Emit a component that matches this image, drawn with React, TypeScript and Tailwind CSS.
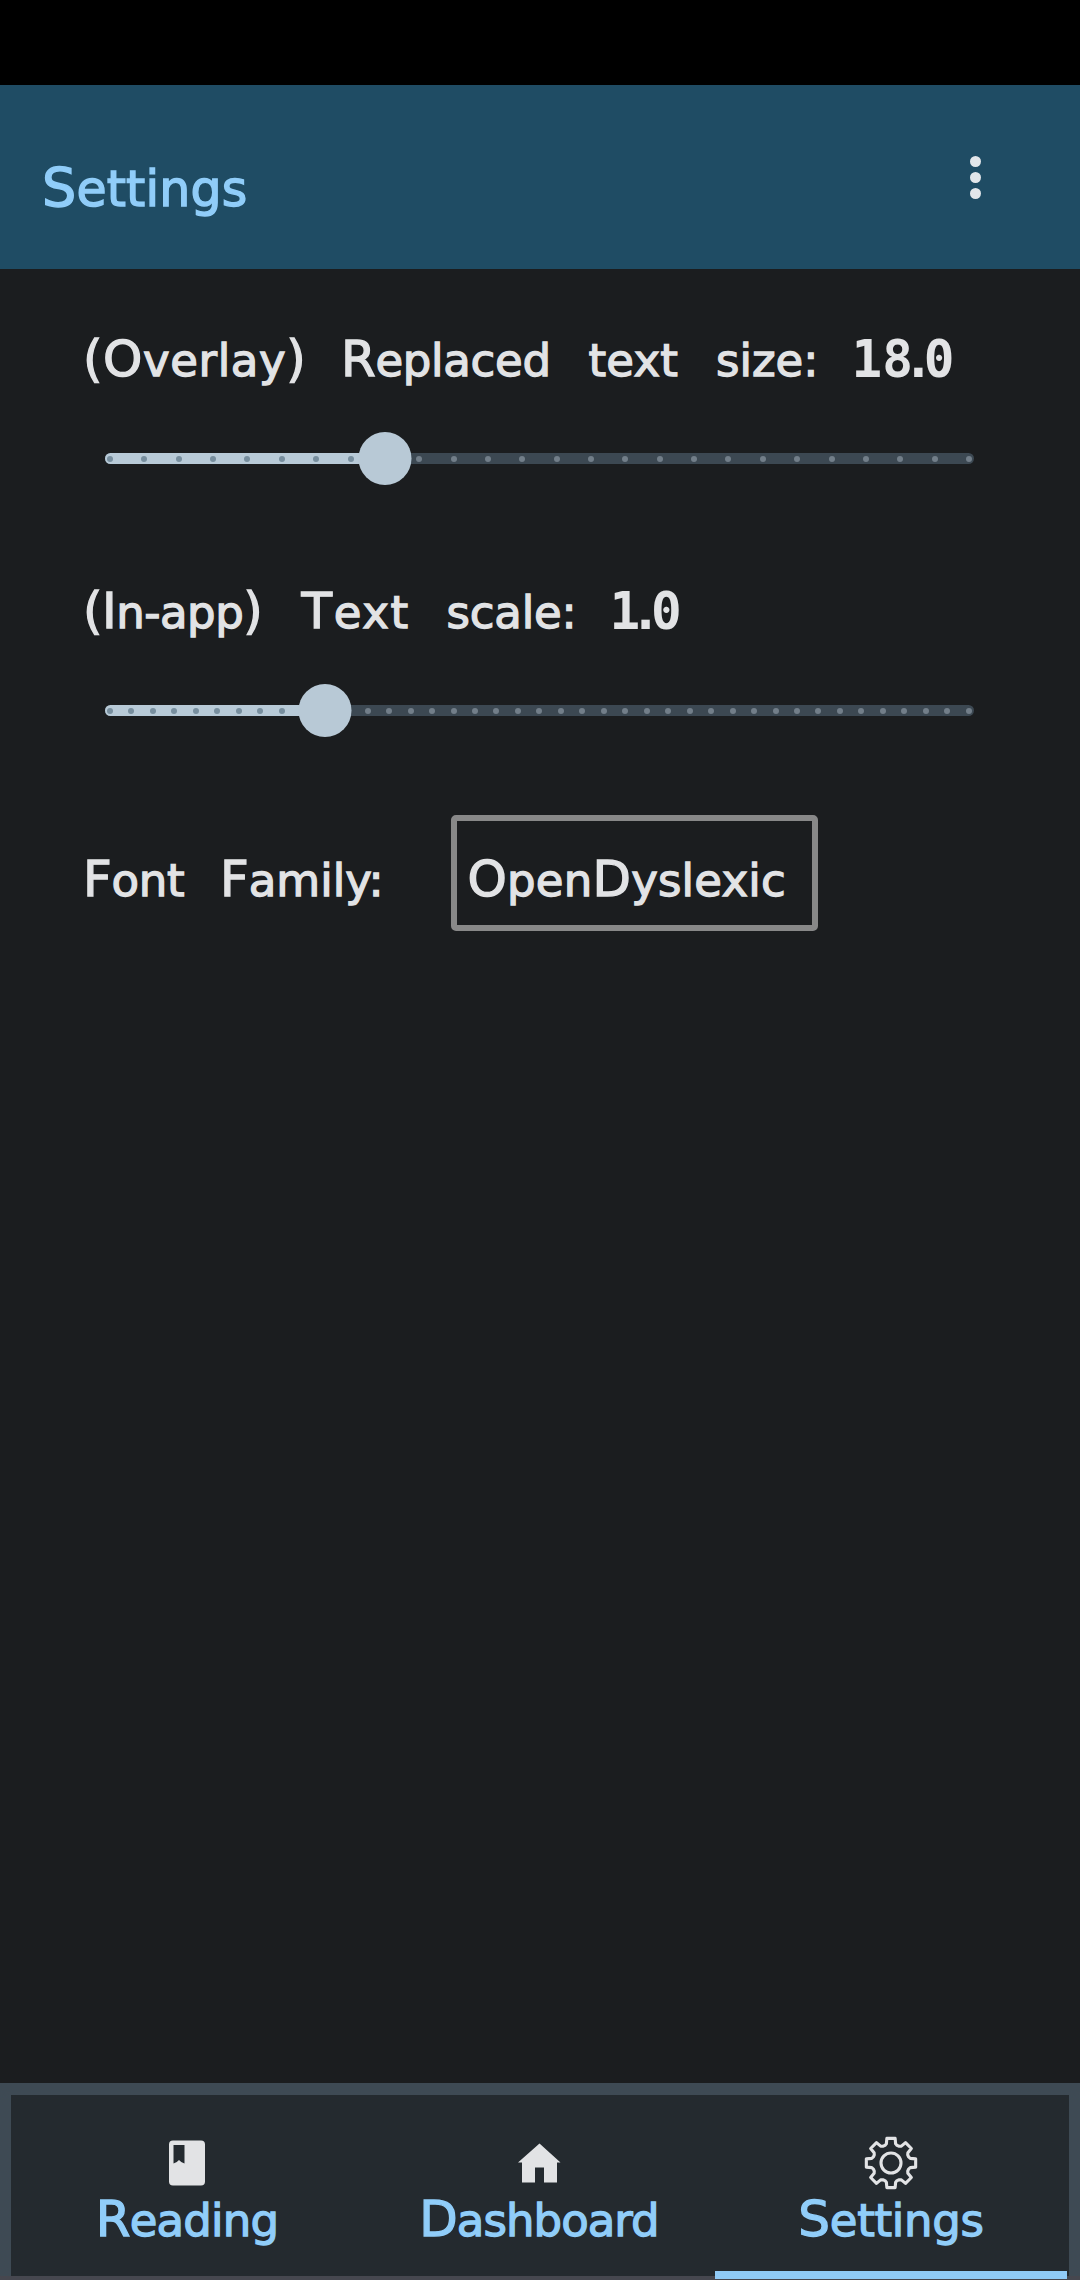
import React from "react";

type Part = { t: string; cls?: string };

function Mixed({ text, big, small }: { text: string; big: string; small: string }) {
  const parts: Part[] = (text.match(/[A-Z()]+|[^A-Z()]+/g) ?? []).map((t) => ({
    t,
    cls: /[A-Z()]/.test(t) ? big : small,
  }));
  return (
    <>
      {parts.map((p, i) => (
        <span key={i} className={p.cls}>
          {p.t}
        </span>
      ))}
    </>
  );
}

function Word({ text, className = "" }: { text: string; className?: string }) {
  return (
    <span
      className={`block h-[60px] shrink-0 whitespace-nowrap text-[50px] leading-[60px] [-webkit-text-stroke:1.3px_currentColor] ${className}`}
    >
      <Mixed text={text} big="text-[50px] leading-none" small="text-[45px] leading-none" />
    </span>
  );
}

function Value({ lead, last }: { lead: string; last: string }) {
  return (
    <span className="block h-[60px] whitespace-nowrap pt-px font-['DejaVu_Sans_Mono',monospace] text-[51px] font-bold leading-[60px]">
      {lead.slice(0, -1)}
      <span className="tracking-[-10px]">{lead.slice(-1)}.</span>
      {last}
    </span>
  );
}

function Slider({ steps, value }: { steps: number; value: number }) {
  const pos = 5 + (859 * value) / steps;
  return (
    <div className="relative ml-[105px] flex h-[53px] w-[869px] items-center">
      <div className="relative flex h-[11px] w-full items-center overflow-hidden rounded-full bg-[#3c4852]">
        <div className="absolute inset-y-0 left-0 bg-[#b8cad7]" style={{ width: pos }} />
        <div className="relative flex w-full justify-between px-[2px]">
          {Array.from({ length: steps + 1 }, (_, i) => (
            <span
              key={i}
              className={`size-[6px] rounded-full ${i < value ? "bg-[#778e9e]" : "bg-[#727e89]"}`}
            />
          ))}
        </div>
      </div>
      <div
        className="absolute top-0 size-[53px] -translate-x-1/2 rounded-full bg-[#b8c9d6]"
        style={{ left: pos + 0.5 }}
      />
    </div>
  );
}

function BookIcon() {
  return (
    <svg viewBox="0 0 54 54" className="size-[54px]" fill="#e2e3e5">
      <path
        fillRule="evenodd"
        d="M13 4.500h28q4 0 4 4v37q0 4-4 4H13q-4 0-4-4v-37q0-4 4-4zM13.500 9v18.500q3.500-1 5.500-3.500q2 2.500 5.500 3.500V9z"
      />
    </svg>
  );
}

function HomeIcon() {
  return (
    <svg viewBox="0 0 54 54" className="size-[54px]" fill="#e2e3e5">
      <path d="M27.500 7.500 48.500 26.500H45V46.500H32V31.500h-9V46.500H10V26.500H6z" />
    </svg>
  );
}

const gearPath = (() => {
  const pts: string[] = [];
  const at = (r: number, deg: number) => {
    const a = (deg * Math.PI) / 180;
    return `${(27 + r * Math.sin(a)).toFixed(2)} ${(27 - r * Math.cos(a)).toFixed(2)}`;
  };
  for (let k = 0; k < 8; k++) {
    const c = k * 45;
    pts.push(
      at(18.6, c - 19),
      at(19.8, c - 13.5),
      at(25, c - 9.5),
      at(25, c + 9.5),
      at(19.8, c + 13.5),
      at(18.6, c + 19),
    );
  }
  return `M${pts.join("L")}Z`;
})();

function GearIcon() {
  return (
    <svg viewBox="0 0 54 54" className="size-[54px]" fill="none" stroke="#e2e3e5" strokeWidth="3.1" strokeLinejoin="round">
      <path d={gearPath} />
      <circle cx="27" cy="27" r="10" />
    </svg>
  );
}

function Tab({ icon, label, className }: { icon: React.ReactNode; label: string; className: string }) {
  return (
    <div className="flex w-[352px] flex-col items-center pt-[41px]">
      {icon}
      <div className="-mt-px h-[60px] text-[#90cdf9]">
        <Word text={label} className={className} />
      </div>
    </div>
  );
}

export default function App() {
  return (
    <div className="flex h-[2280px] w-[1080px] flex-col overflow-hidden bg-[#1b1d1f] font-['DejaVu_Sans',sans-serif] text-[#e2e3e5]">
      <div className="h-[85px] shrink-0 bg-black" />
      <header className="flex h-[184px] shrink-0 justify-between bg-[#1f4c64] pl-[42px] pr-[99px]">
        <h1 className="pt-[68px] text-[54px] leading-[70px] tracking-[0.15px] text-[#90cdf9] [-webkit-text-stroke:1.4px_currentColor]">
          <Mixed text="Settings" big="text-[54px] leading-none" small="text-[49px] leading-none" />
        </h1>
        <div className="flex flex-col gap-[5px] pt-[71px]">
          <span className="size-[11px] rounded-full bg-[#e2e6ea]" />
          <span className="size-[11px] rounded-full bg-[#e2e6ea]" />
          <span className="size-[11px] rounded-full bg-[#e2e6ea]" />
        </div>
      </header>

      <main className="flex min-h-0 flex-1 flex-col">
        <div className="mt-[60px] flex pl-[83px]">
          <Word text="(Overlay)" className="w-[258px] tracking-[0.6px]" />
          <Word text="Replaced" className="w-[247.500px] tracking-[-0.3px]" />
          <Word text="text" className="w-[127.500px] tracking-[0.2px]" />
          <Word text="size:" className="w-[135.500px]" />
          <Value lead="18" last="0" />
        </div>
        <div className="mt-[43px]">
          <Slider steps={25} value={8} />
        </div>

        <div className="mt-[96px] flex pl-[83px]">
          <Word text="(In-app)" className="w-[218.500px] tracking-[-0.5px]" />
          <Word text="Text" className="w-[145px] tracking-[1.6px]" />
          <Word text="scale:" className="w-[163px] tracking-[-0.2px]" />
          <Value lead="1" last="0" />
        </div>
        <div className="mt-[43px]">
          <Slider steps={40} value={10} />
        </div>

        <div className="mt-[78px] flex pl-[83px]">
          <Word text="Font" className="mt-[34px] w-[137px] tracking-[-0.3px]" />
          <Word text="Family:" className="mt-[34px] w-[231px]" />
          <div className="h-[116px] w-[367px] rounded-[5px] border-[6px] border-[#888888] pl-[10.500px] pt-[28px]">
            <Word text="OpenDyslexic" className="tracking-[0.2px]" />
          </div>
        </div>
      </main>

      <nav className="relative flex h-[197px] shrink-0 flex-col bg-[#3e4a54] px-[11px] pt-[12px]">
        <div className="flex h-[181px] bg-[#242a2f]">
          <Tab icon={<BookIcon />} label="Reading" className="tracking-[-0.8px]" />
          <Tab icon={<HomeIcon />} label="Dashboard" className="tracking-[-0.95px]" />
          <Tab icon={<GearIcon />} label="Settings" className="tracking-[-0.3px]" />
        </div>
        <div className="absolute bottom-0 left-0 h-[4px] w-full bg-[#46474f]" />
        <div className="absolute bottom-[1px] left-[715px] h-[8px] w-[352px] bg-[#90cbf7]" />
      </nav>
    </div>
  );
}
